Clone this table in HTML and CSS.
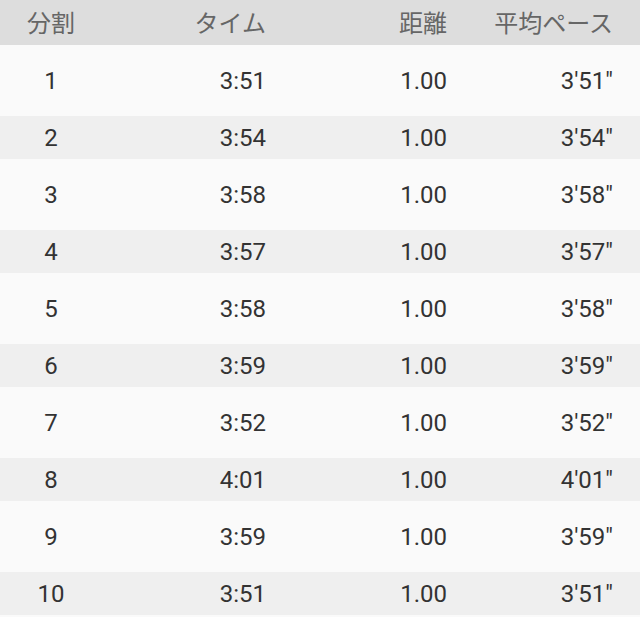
FILE: index.html
```html
<!DOCTYPE html>
<html lang="ja">
<head>
<meta charset="utf-8">
<link rel="stylesheet" href="styles.css">
</head>
<body>
<div class="table">
  <div class="row head">
    <div class="c1">分割</div><div class="c">タイム</div><div class="c">距離</div><div class="c">平均ペース</div>
  </div>
  <div class="body">
    <div class="row"><div class="c1">1</div><div class="c">3:51</div><div class="c">1.00</div><div class="c">3'51"</div></div>
    <div class="row"><div class="c1">2</div><div class="c">3:54</div><div class="c">1.00</div><div class="c">3'54"</div></div>
    <div class="row"><div class="c1">3</div><div class="c">3:58</div><div class="c">1.00</div><div class="c">3'58"</div></div>
    <div class="row"><div class="c1">4</div><div class="c">3:57</div><div class="c">1.00</div><div class="c">3'57"</div></div>
    <div class="row"><div class="c1">5</div><div class="c">3:58</div><div class="c">1.00</div><div class="c">3'58"</div></div>
    <div class="row"><div class="c1">6</div><div class="c">3:59</div><div class="c">1.00</div><div class="c">3'59"</div></div>
    <div class="row"><div class="c1">7</div><div class="c">3:52</div><div class="c">1.00</div><div class="c">3'52"</div></div>
    <div class="row"><div class="c1">8</div><div class="c">4:01</div><div class="c">1.00</div><div class="c">4'01"</div></div>
    <div class="row"><div class="c1">9</div><div class="c">3:59</div><div class="c">1.00</div><div class="c">3'59"</div></div>
    <div class="row"><div class="c1">10</div><div class="c">3:51</div><div class="c">1.00</div><div class="c">3'51"</div></div>
  </div>
</div>
</body>
</html>
```
FILE: styles.css
```css
html, body {
  margin: 0;
  padding: 0;
  background: #fafafa;
}
body {
  font-family: Roboto, "Noto Sans CJK JP", sans-serif;
  font-size: 24px;
  color: #333333;
}
.table {
  width: 640px;
}
.row {
  display: grid;
  grid-template-columns: 102px 164px 181px 166px;
  padding-right: 27px;
  align-items: center;
  height: 71px;
  background: #fafafa;
}
.row .c1 {
  text-align: center;
}
.row .c {
  text-align: right;
}
.head {
  height: 45px;
  background: #dddddd;
  color: #666666;
  padding-bottom: 2px;
  box-sizing: border-box;
}
.body .row:nth-child(even) {
  height: 43px;
  background: #efefef;
}
```
